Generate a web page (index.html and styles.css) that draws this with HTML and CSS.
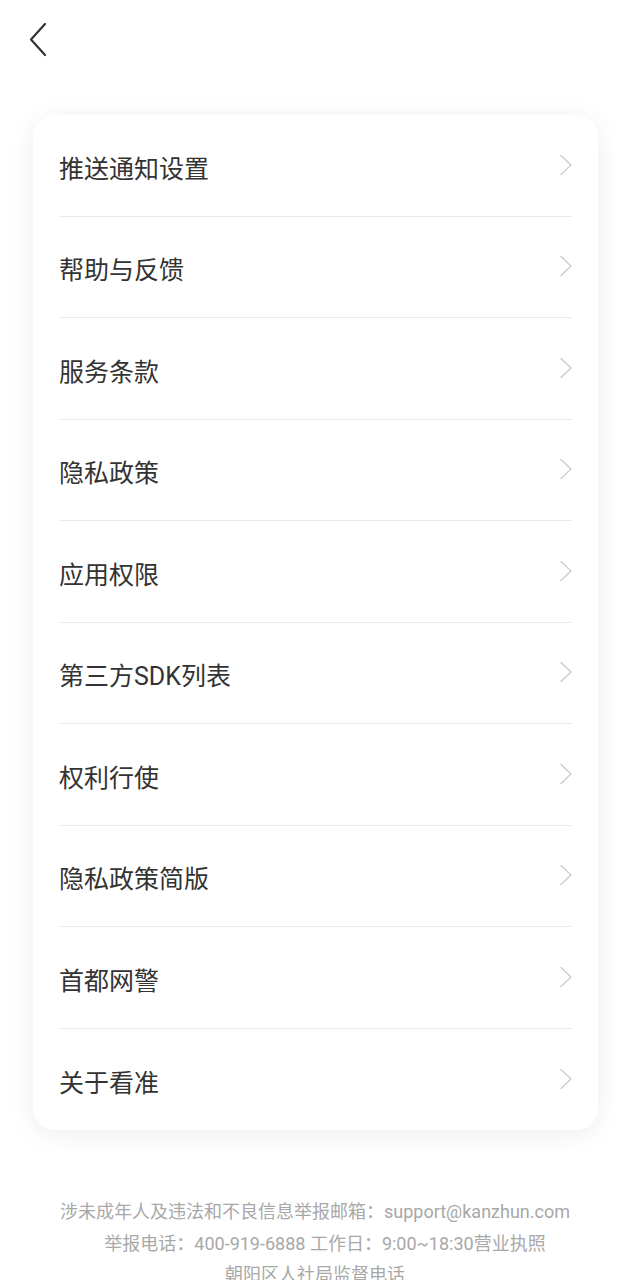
FILE: index.html
```html
<!DOCTYPE html>
<html lang="zh-CN">
<head>
<meta charset="utf-8">
<title>设置</title>
<link rel="stylesheet" href="styles.css">
</head>
<body>
<div class="page">
  <header class="topbar">
    <svg class="back" width="20" height="36" viewBox="0 0 20 36" aria-label="返回">
      <polyline points="16,2 2,17.5 16,33" fill="none" stroke="#333" stroke-width="2.2" stroke-linecap="round" stroke-linejoin="round"/>
    </svg>
  </header>
  <main class="card">
    <div class="row"><span class="label">推送通知设置</span><svg class="chev" width="14" height="22" viewBox="0 0 14 22"><polyline points="2,1.5 12,11 2,20.5" fill="none" stroke="#cdcdcd" stroke-width="1.4" stroke-linecap="round" stroke-linejoin="round"/></svg></div>
    <div class="row"><span class="label">帮助与反馈</span><svg class="chev" width="14" height="22" viewBox="0 0 14 22"><polyline points="2,1.5 12,11 2,20.5" fill="none" stroke="#cdcdcd" stroke-width="1.4" stroke-linecap="round" stroke-linejoin="round"/></svg></div>
    <div class="row"><span class="label">服务条款</span><svg class="chev" width="14" height="22" viewBox="0 0 14 22"><polyline points="2,1.5 12,11 2,20.5" fill="none" stroke="#cdcdcd" stroke-width="1.4" stroke-linecap="round" stroke-linejoin="round"/></svg></div>
    <div class="row"><span class="label">隐私政策</span><svg class="chev" width="14" height="22" viewBox="0 0 14 22"><polyline points="2,1.5 12,11 2,20.5" fill="none" stroke="#cdcdcd" stroke-width="1.4" stroke-linecap="round" stroke-linejoin="round"/></svg></div>
    <div class="row"><span class="label">应用权限</span><svg class="chev" width="14" height="22" viewBox="0 0 14 22"><polyline points="2,1.5 12,11 2,20.5" fill="none" stroke="#cdcdcd" stroke-width="1.4" stroke-linecap="round" stroke-linejoin="round"/></svg></div>
    <div class="row"><span class="label">第三方SDK列表</span><svg class="chev" width="14" height="22" viewBox="0 0 14 22"><polyline points="2,1.5 12,11 2,20.5" fill="none" stroke="#cdcdcd" stroke-width="1.4" stroke-linecap="round" stroke-linejoin="round"/></svg></div>
    <div class="row"><span class="label">权利行使</span><svg class="chev" width="14" height="22" viewBox="0 0 14 22"><polyline points="2,1.5 12,11 2,20.5" fill="none" stroke="#cdcdcd" stroke-width="1.4" stroke-linecap="round" stroke-linejoin="round"/></svg></div>
    <div class="row"><span class="label">隐私政策简版</span><svg class="chev" width="14" height="22" viewBox="0 0 14 22"><polyline points="2,1.5 12,11 2,20.5" fill="none" stroke="#cdcdcd" stroke-width="1.4" stroke-linecap="round" stroke-linejoin="round"/></svg></div>
    <div class="row"><span class="label">首都网警</span><svg class="chev" width="14" height="22" viewBox="0 0 14 22"><polyline points="2,1.5 12,11 2,20.5" fill="none" stroke="#cdcdcd" stroke-width="1.4" stroke-linecap="round" stroke-linejoin="round"/></svg></div>
    <div class="row last"><span class="label">关于看准</span><svg class="chev" width="14" height="22" viewBox="0 0 14 22"><polyline points="2,1.5 12,11 2,20.5" fill="none" stroke="#cdcdcd" stroke-width="1.4" stroke-linecap="round" stroke-linejoin="round"/></svg></div>
  </main>
  <footer class="footer">
    <p class="line">涉未成年人及违法和不良信息举报邮箱：support@kanzhun.com</p>
    <p class="line shifted">举报电话：400-919-6888 工作日：9:00~18:30营业执照</p>
    <p class="line">朝阳区人社局监督电话</p>
  </footer>
</div>
</body>
</html>
```

FILE: styles.css
```css
html, body {
  margin: 0;
  padding: 0;
  background: #ffffff;
}

body {
  font-family: Roboto, "Noto Sans CJK SC", sans-serif;
  color: #333333;
  width: 630px;
  height: 1280px;
  overflow: hidden;
}

.page {
  display: flex;
  flex-direction: column;
}

.topbar {
  height: 115px;
  box-sizing: border-box;
  padding: 22px 0 0 29px;
}

.back {
  display: block;
}

.card {
  margin: 0 32px 0 33px;
  background: #ffffff;
  border-radius: 22px;
  box-shadow: 0 4px 26px rgba(0, 0, 0, 0.075);
  padding: 0 26px;
}

.row {
  height: 101.5px;
  box-sizing: border-box;
  display: flex;
  align-items: center;
  justify-content: space-between;
  border-bottom: 1px solid #e9e9e9;
  padding-top: 3px;
}

.row.last {
  border-bottom: none;
}

.label {
  font-size: 25px;
  color: #333333;
  letter-spacing: 0;
}

.chev {
  display: block;
  margin-right: -1px;
  margin-top: -4px;
}

.footer {
  padding-top: 66px;
  text-align: center;
  color: #a8a8a8;
  font-size: 18px;
}

.line {
  margin: 0;
  line-height: 31.5px;
  white-space: nowrap;
}

.line.shifted {
  padding-left: 20px;
}
```
